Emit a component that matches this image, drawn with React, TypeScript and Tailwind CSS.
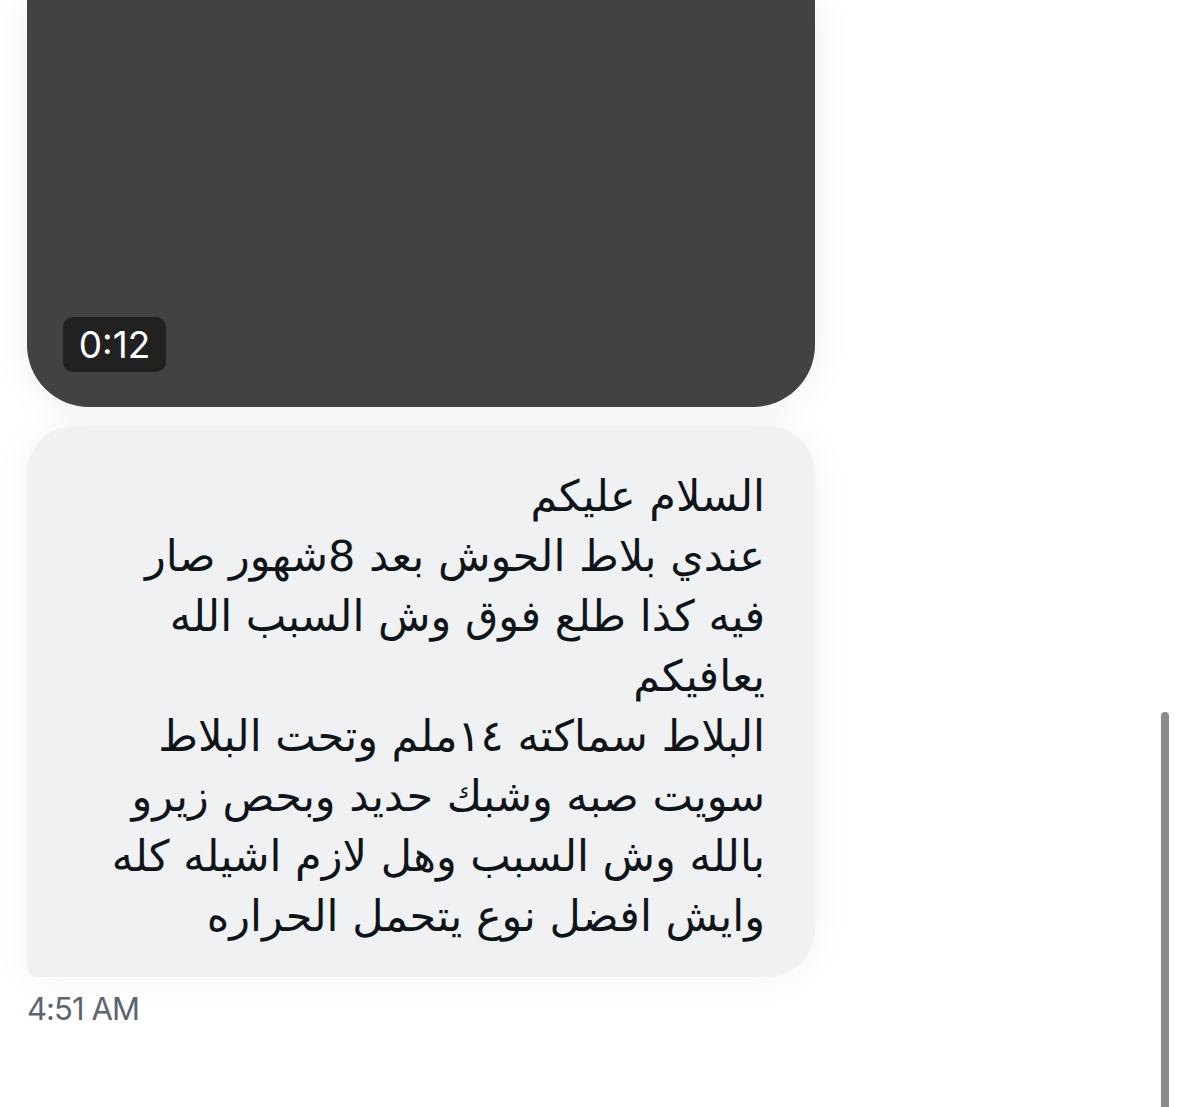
import React from "react";

const lines = [
  "السلام عليكم",
  "عندي بلاط الحوش بعد 8شهور صار",
  "فيه كذا طلع فوق وش السبب الله",
  "يعافيكم",
  "البلاط سماكته ١٤ملم وتحت البلاط",
  "سويت صبه وشبك حديد وبحص زيرو",
  "بالله وش السبب وهل لازم اشيله كله",
  "وايش افضل نوع يتحمل الحراره",
];

const App: React.FC = () => {
  return (
    <div className="relative h-[1107px] w-full overflow-hidden bg-white">
      <div className="ml-[27px] flex w-[788px] flex-col">
        {/* video bubble */}
        <div className="flex h-[407px] items-end rounded-b-[62px] bg-[#424242] shadow-[0_0_40px_rgba(0,0,0,0.07)]">
          <div className="mb-[35px] ml-[36px] flex h-[55px] w-[103px] items-center justify-center rounded-[10px] bg-[#212121]">
            <span className="font-['Inter',sans-serif] text-[37px] leading-none text-white">0:12</span>
          </div>
        </div>

        {/* message bubble */}
        <div
          dir="rtl"
          className="mt-[19px] flex h-[551px] flex-col rounded-t-[48px] rounded-br-[48px] rounded-bl-[10px] bg-[#eff1f3] pr-[50px] pt-[40px] shadow-[0_0_40px_rgba(0,0,0,0.05)]"
        >
          {lines.map((line, i) => (
            <div
              key={i}
              className="whitespace-nowrap font-['DejaVu_Sans',sans-serif] text-[43px] leading-[60px] text-[#0f1419]"
            >
              {line}
            </div>
          ))}
        </div>

        <div className="mt-[14px] font-['Inter',sans-serif] text-[31px] leading-[36px] tracking-[-0.03em] text-[#5b6470]">
          4:51 AM
        </div>
      </div>

      {/* scrollbar */}
      <div className="absolute left-[1161px] top-[712px] h-[420px] w-[8px] rounded-full bg-[#8c8c8c]" />
    </div>
  );
};

export default App;
